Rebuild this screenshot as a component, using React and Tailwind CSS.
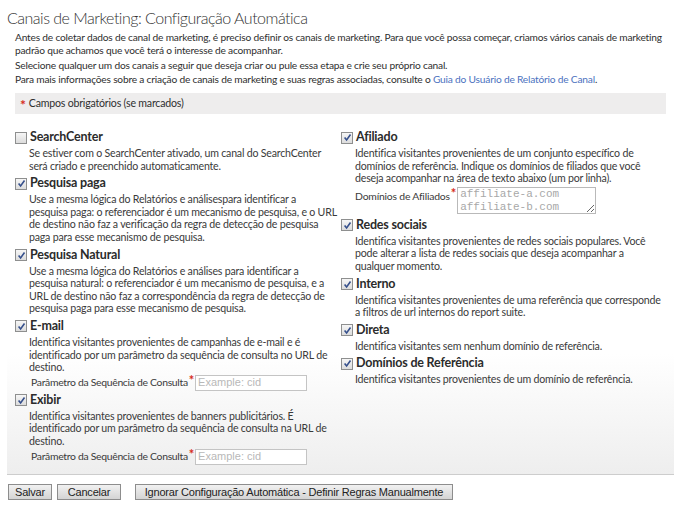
import React from 'react'

function Check({ checked }) {
  return (
    <span className="inline-flex items-center justify-center w-[12px] h-[12px] border border-[#8e8f8f] bg-gradient-to-b from-[#f6f6f6] to-[#dcdcdc] shrink-0">
      {checked && (
        <svg width="9" height="9" viewBox="0 0 9 9">
          <path d="M1.6 4.4 L3.6 6.9 L7.5 1.5" fill="none" stroke="#36508c" strokeWidth="1.6" />
        </svg>
      )}
    </span>
  )
}

function Channel({ title, checked = true, lines, children }) {
  return (
    <div className="mb-[4px]">
      <div className="flex items-center gap-[3px] h-[15px]">
        <Check checked={checked} />
        <span className="text-[12.5px] font-bold tracking-[-0.2px] text-[#2b2b2b]">{title}</span>
      </div>
      <div className="pl-[14px] pt-[2px] text-[10.6px] leading-[12.6px] text-[#3a3a3a]">
        {lines.map((l, i) => <div key={i} className="whitespace-nowrap">{l}</div>)}
      </div>
      {children}
    </div>
  )
}

function ParamRow() {
  return (
    <div className="flex items-center pl-[16px] pt-[1px] -mb-[2px]">
      <span className="text-[10.4px] tracking-[-0.3px] text-[#3a3a3a]">Parâmetro da Sequência de Consulta</span>
      <span className="text-[#d62b20] text-[13px] leading-none self-start -mt-[1px] mx-[1px] font-bold">*</span>
      <input
        className="w-[112px] h-[16px] border border-[#c4c4c4] px-[2px] text-[11px] tracking-normal font-['Liberation_Sans',Arial,sans-serif] placeholder:text-[#b8b8b8] bg-white"
        placeholder="Example: cid"
      />
    </div>
  )
}

function Btn({ className = '', children }) {
  return (
    <button className={`h-[16px] border border-[#8d8d8d] bg-gradient-to-b from-[#f1f1f1] to-[#d4d4d4] text-[11px] leading-none tracking-[-0.2px] text-[#222] font-['Liberation_Sans',Arial,sans-serif] ${className}`}>
      {children}
    </button>
  )
}

export default function App() {
  return (
    <div className="w-[674px] h-[508px] bg-white font-['Lato','Open_Sans',sans-serif] tracking-[-0.2px] text-[#333] overflow-hidden">
      <h1 className="px-[7px] pt-[8px] text-[16px] tracking-[-0.5px] font-light text-[#333] leading-[20px]">
        Canais de Marketing: Configuração Automática
      </h1>

      <div className="px-[15px] pt-[3px] text-[10.2px] leading-[13px] text-[#2f2f2f]">
        <p>
          <span className="whitespace-nowrap">Antes de coletar dados de canal de marketing, é preciso definir os canais de marketing. Para que você possa começar, criamos vários canais de marketing</span><br />
          padrão que achamos que você terá o interesse de acompanhar.
        </p>
        <p className="mt-[2px]">Selecione qualquer um dos canais a seguir que deseja criar ou pule essa etapa e crie seu próprio canal.</p>
        <p className="mt-[1px]">
          Para mais informações sobre a criação de canais de marketing e suas regras associadas, consulte o{' '}
          <a className="text-[#4c72c0]">Guia do Usuário de Relatório de Canal</a>.
        </p>
        <div className="mt-[7px] w-[651px] h-[21px] bg-[#eeeded] flex items-center pl-[5px] gap-[3px]">
          <span className="text-[#d62b20] font-bold text-[14px] leading-none mt-[2px]">*</span>
          <span className="text-[10.6px]">Campos obrigatórios (se marcados)</span>
        </div>
      </div>

      <div className="ml-[7px] mt-[16px] h-[345px] bg-gradient-to-b from-white from-65% to-[#eeeeee] border-b border-[#cdcdcd] grid grid-cols-[326px_1fr] px-[8px]">
        <div>
          <Channel
            title="SearchCenter"
            checked={false}
            lines={[
              'Se estiver com o SearchCenter ativado, um canal do SearchCenter',
              'será criado e preenchido automaticamente.',
            ]}
          />
          <Channel
            title="Pesquisa paga"
            lines={[
              'Use a mesma lógica do Relatórios e análisespara identificar a',
              'pesquisa paga: o referenciador é um mecanismo de pesquisa, e o URL',
              'de destino não faz a verificação da regra de detecção de pesquisa',
              'paga para esse mecanismo de pesquisa.',
            ]}
          />
          <Channel
            title="Pesquisa Natural"
            lines={[
              'Use a mesma lógica do Relatórios e análises para identificar a',
              'pesquisa natural: o referenciador é um mecanismo de pesquisa, e a',
              'URL de destino não faz a correspondência da regra de detecção de',
              'pesquisa paga para esse mecanismo de pesquisa.',
            ]}
          />
          <Channel
            title="E-mail"
            lines={[
              'Identifica visitantes provenientes de campanhas de e-mail e é',
              'identificado por um parâmetro da sequência de consulta no URL de',
              'destino.',
            ]}
          >
            <ParamRow />
          </Channel>
          <Channel
            title="Exibir"
            lines={[
              'Identifica visitantes provenientes de banners publicitários. É',
              'identificado por um parâmetro da sequência de consulta na URL de',
              'destino.',
            ]}
          >
            <ParamRow />
          </Channel>
        </div>

        <div>
          <Channel
            title="Afiliado"
            lines={[
              'Identifica visitantes provenientes de um conjunto específico de',
              'domínios de referência. Indique os domínios de filiados que você',
              'deseja acompanhar na área de texto abaixo (um por linha).',
            ]}
          >
            <div className="flex items-start pl-[14px] pt-[2px]">
              <span className="text-[10.4px] text-[#3a3a3a] mt-[2px]">Domínios de Afiliados</span>
              <span className="text-[#d62b20] text-[13px] leading-none font-bold mx-[1px]">*</span>
              <textarea
                className="w-[139px] h-[27px] border border-[#b9b9b9] px-[2px] py-0 text-[11px] leading-[13px] tracking-normal font-['Liberation_Mono',monospace] text-[#a8a8a8] resize-y"
                defaultValue={'affiliate-a.com\naffiliate-b.com'}
              />
            </div>
          </Channel>
          <Channel
            title="Redes sociais"
            lines={[
              'Identifica visitantes provenientes de redes sociais populares. Você',
              'pode alterar a lista de redes sociais que deseja acompanhar a',
              'qualquer momento.',
            ]}
          />
          <Channel
            title="Interno"
            lines={[
              'Identifica visitantes provenientes de uma referência que corresponde',
              'a filtros de url internos do report suite.',
            ]}
          />
          <Channel title="Direta" lines={['Identifica visitantes sem nenhum domínio de referência.']} />
          <Channel title="Domínios de Referência" lines={['Identifica visitantes provenientes de um domínio de referência.']} />
        </div>
      </div>

      <div className="flex gap-[5px] px-[8px] pt-[9px]">
        <Btn className="w-[44px]">Salvar</Btn>
        <Btn className="w-[64px]">Cancelar</Btn>
        <Btn className="ml-[9px] w-[318px]">Ignorar Configuração Automática - Definir Regras Manualmente</Btn>
      </div>
    </div>
  )
}
